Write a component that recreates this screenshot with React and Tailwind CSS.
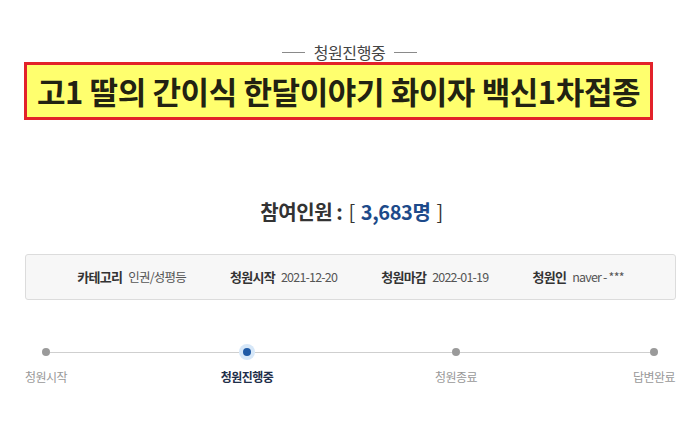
export default function App() {
  const info = [
    ["카테고리", "인권/성평등"],
    ["청원시작", "2021-12-20"],
    ["청원마감", "2022-01-19"],
    ["청원인", "naver - ***"],
  ];
  return (
    <div className="w-[699px] h-[428px] bg-white overflow-hidden font-['Noto_Sans_CJK_KR','Noto_Sans',sans-serif]">
      <div className="pt-[43px] flex justify-center items-center gap-[9px]">
        <div className="w-[23px] h-px bg-[#8a8a8a]" />
        <span className="text-[16px] leading-[18px] text-[#444] tracking-[-0.4px]">청원진행중</span>
        <div className="w-[23px] h-px bg-[#8a8a8a]" />
      </div>
      <div className="mt-[1px] ml-[24px] w-[629px] h-[58px] border-[3px] border-[#e2222a] bg-[#ffff6e] flex items-center justify-center">
        <span className="text-[31px] leading-[36px] font-bold text-[#222212] tracking-[-0.4px] whitespace-nowrap">
          고1 딸의 간이식 한달이야기 화이자 백신1차접종
        </span>
      </div>
      <div className="mt-[78px] h-[28px] flex justify-center items-center text-[20px] leading-[28px] text-[#333] tracking-[-0.4px] whitespace-nowrap pl-[4px]">
        <span className="font-bold">참여인원 :</span>
        <span className="ml-[6px]">[</span>
        <span className="ml-[6px] font-bold text-[#1d4a8a]">3,683명</span>
        <span className="ml-[6px]">]</span>
      </div>
      <div className="mt-[28px] ml-[25px] w-[651px] h-[46px] rounded-[3px] border border-[#dcdcdc] bg-[#f7f7f7] flex justify-center items-center gap-[44px]">
        {info.map(([k, v]) => (
          <div key={k} className="flex items-center gap-[6px] whitespace-nowrap">
            <span className="text-[13px] leading-[16px] font-bold text-[#333] tracking-[-0.7px]">{k}</span>
            <span className="text-[12.5px] leading-[16px] text-[#555] tracking-[-0.8px]">{v}</span>
          </div>
        ))}
      </div>
      <div className="mt-[44px] ml-[42px] w-[616px] h-[16px] flex items-center">
        <div className="w-[8px] h-[8px] rounded-full bg-[#9a9a9a] shrink-0" />
        <div className="w-[189px] h-px bg-[#cfcfcf] shrink-0" />
        <div className="w-[16px] h-[16px] rounded-full bg-[#d6e7f8] flex items-center justify-center shrink-0">
          <div className="w-[8px] h-[8px] rounded-full bg-[#1f5aa6]" />
        </div>
        <div className="w-[197px] h-px bg-[#cfcfcf] shrink-0" />
        <div className="w-[8px] h-[8px] rounded-full bg-[#9a9a9a] shrink-0" />
        <div className="w-[190px] h-px bg-[#cfcfcf] shrink-0" />
        <div className="w-[8px] h-[8px] rounded-full bg-[#9a9a9a] shrink-0" />
      </div>
      <div className="mt-[9px] flex text-[12px] leading-[16px] tracking-[-0.5px] whitespace-nowrap">
        <div className="ml-[6px] w-[80px] text-center text-[#999]">청원시작</div>
        <div className="ml-[121px] w-[80px] text-center text-[#1f2f4a] font-bold">청원진행중</div>
        <div className="ml-[129px] w-[80px] text-center text-[#999]">청원종료</div>
        <div className="ml-[118px] w-[80px] text-center text-[#999]">답변완료</div>
      </div>
    </div>
  );
}
